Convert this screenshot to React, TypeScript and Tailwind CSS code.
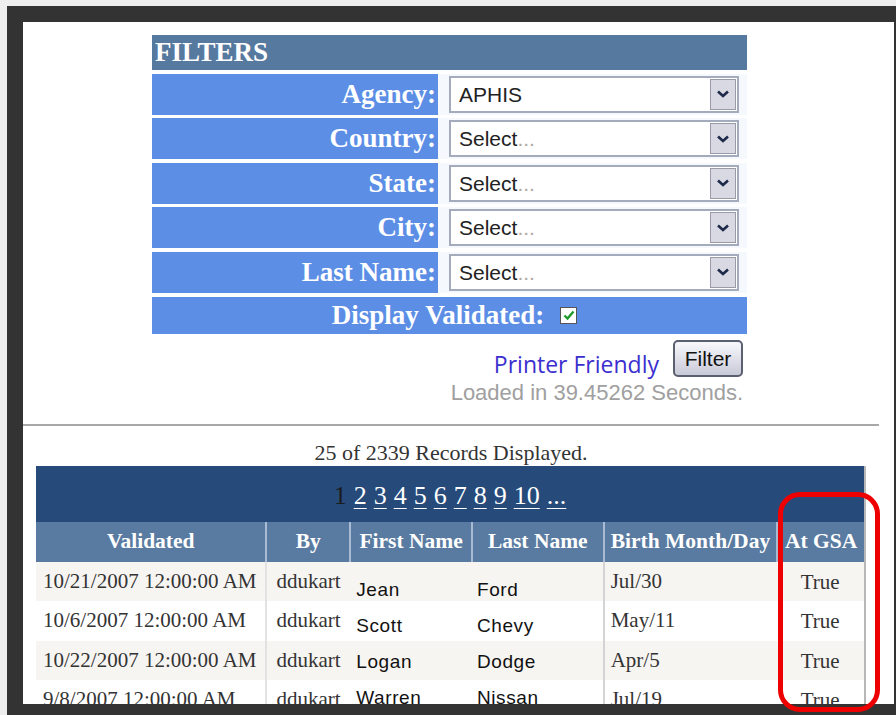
import React from "react";

const serif = { fontFamily: '"Liberation Serif", "Times New Roman", serif' };
const sans = { fontFamily: '"Liberation Sans", Arial, sans-serif' };
const soft = { fontFamily: '"Open Sans", "Liberation Sans", sans-serif' };

const filters = [
  { label: "Agency:", value: "APHIS", placeholder: false },
  { label: "Country:", value: "Select", placeholder: true },
  { label: "State:", value: "Select", placeholder: true },
  { label: "City:", value: "Select", placeholder: true },
  { label: "Last Name:", value: "Select", placeholder: true },
];

const rows = [
  { validated: "10/21/2007 12:00:00 AM", by: "ddukart", first: "Jean", last: "Ford", birth: "Jul/30", gsa: "True" },
  { validated: "10/6/2007 12:00:00 AM", by: "ddukart", first: "Scott", last: "Chevy", birth: "May/11", gsa: "True" },
  { validated: "10/22/2007 12:00:00 AM", by: "ddukart", first: "Logan", last: "Dodge", birth: "Apr/5", gsa: "True" },
  { validated: "9/8/2007 12:00:00 AM", by: "ddukart", first: "Warren", last: "Nissan", birth: "Jul/19", gsa: "True" },
];

// name cells sit on a tighter rhythm than the rest of the row
const nameOffsets = ["pt-[18px]", "pt-[14.5px]", "pt-[11px]", "pt-[7.5px]"];

function Chevron() {
  return (
    <svg width="14" height="10" viewBox="0 0 14 10">
      <path d="M2 2.5 L7 7 L12 2.5" fill="none" stroke="#1d2a4a" strokeWidth="2.6" />
    </svg>
  );
}

function SelectBox({ value, placeholder }: { value: string; placeholder: boolean }) {
  return (
    <div className="flex h-[37px] w-[290px] items-center border-2 border-[#a3abbd] bg-white">
      <div className="flex-1 pl-[8px] text-[21px] leading-none text-[#222]" style={sans}>
        {value}
        {placeholder && <span className="text-[#b0a8a0]">...</span>}
      </div>
      <div className="mr-[1px] flex h-[31px] w-[26px] items-center justify-center border border-[#9a9aa8] bg-[#d9d9e4]">
        <Chevron />
      </div>
    </div>
  );
}

const cols = ["w-[230px]", "w-[84px]", "w-[122px]", "w-[132px]", "w-[174px]", "w-[88px]"];
const heads = ["Validated", "By", "First Name", "Last Name", "Birth Month/Day", "At GSA"];

export default function App() {
  return (
    <div className="relative h-[715px] w-[896px] overflow-hidden bg-[#eeeeee] pl-[7px] pt-[6px]">
      <div className="h-full bg-[#333333] pb-[11px] pl-[16px] pr-[2px] pt-[16px]">
        <div className="flex h-full flex-col overflow-hidden bg-white">
          {/* filter panel */}
          <div className="ml-[129px] mt-[13px] flex w-[595px] flex-col gap-[3.6px]">
            <div
              className="flex h-[35px] items-center bg-[#56799f] pl-[3px] text-[27px] font-bold leading-none text-white"
              style={serif}
            >
              FILTERS
            </div>
            {filters.map((f) => (
              <div key={f.label} className="flex h-[41px] items-stretch">
                <div
                  className="flex w-[286px] items-center justify-end bg-[#5c8ee6] pr-[2px] text-[27px] font-bold leading-none text-white"
                  style={serif}
                >
                  {f.label}
                </div>
                <div className="flex flex-1 items-center bg-[#f5f8fd] pl-[11px]">
                  <SelectBox value={f.value} placeholder={f.placeholder} />
                </div>
              </div>
            ))}
            <div
              className="flex h-[37px] items-center justify-center gap-[16px] bg-[#5c8ee6] pl-[10px] text-[27px] font-bold leading-none text-white"
              style={serif}
            >
              <span>Display Validated:</span>
              <span className="flex h-[17px] w-[17px] items-center justify-center border border-[#555] bg-white">
                <svg width="12" height="11" viewBox="0 0 12 11">
                  <path d="M1.5 5.5 L4.5 8.5 L10.5 1.5" fill="none" stroke="#1f9a2a" strokeWidth="2.4" />
                </svg>
              </span>
            </div>
          </div>

          {/* actions */}
          <div className="ml-[129px] mt-[6px] flex h-[37px] w-[591px] items-center justify-end gap-[14px]">
            <span className="mt-[12px] text-[23px] leading-none text-[#3b2fcf]" style={soft}>
              Printer Friendly
            </span>
            <button
              className="flex h-[37px] w-[70px] items-center justify-center rounded-[5px] border-2 border-[#5a6070] bg-gradient-to-b from-[#f8f8fc] to-[#c9cad8] text-[21px] leading-none text-[#111]"
              style={sans}
            >
              Filter
            </button>
          </div>
          <div className="ml-[129px] mt-[5px] w-[591px] text-right text-[22px] leading-none text-[#a0a0a0]" style={sans}>
            Loaded in 39.45262 Seconds.
          </div>

          <div className="mt-[20px] h-[2px] w-[856px] shrink-0 bg-[#a8a8a8]" />

          <div className="mt-[16px] w-[856px] text-center text-[22px] leading-none text-[#333]" style={serif}>
            25 of 2339 Records Displayed.
          </div>

          {/* records table */}
          <div className="ml-[13px] mt-[2px] w-[830px] border-r-2 border-[#b8b8b8]" style={serif}>
            <div className="flex h-[56px] items-center justify-center gap-[7px] bg-[#264b7b] pt-[4px] text-[26px] leading-none">
              <span className="text-[#1c1c1c]">1</span>
              {["2", "3", "4", "5", "6", "7", "8", "9", "10", "..."].map((n) => (
                <span key={n} className="text-white underline decoration-1 underline-offset-4">
                  {n}
                </span>
              ))}
            </div>
            <div className="flex h-[40px] bg-[#5a7ba1]">
              {heads.map((h, i) => (
                <div
                  key={h}
                  className={`${cols[i]} flex items-center justify-center text-[21.5px] font-bold leading-none text-white ${
                    i > 0 ? "border-l-2 border-[#a8bbd2]" : ""
                  }`}
                >
                  {h}
                </div>
              ))}
            </div>
            {rows.map((r, idx) => (
              <div key={r.validated} className={`flex h-[39.5px] ${idx % 2 === 0 ? "bg-[#f7f5f2]" : "bg-white"}`}>
                <div className={`${cols[0]} pl-[7px] pt-[9px] text-[21px] leading-none text-[#333]`}>{r.validated}</div>
                <div className={`${cols[1]} border-l-2 border-[#e2e2e2] pl-[9px] pt-[9px] text-[21px] leading-none text-[#333]`}>
                  {r.by}
                </div>
                <div
                  className={`${cols[2]} ${nameOffsets[idx]} pl-[7px] text-[19px] leading-none tracking-[0.6px] text-[#111]`}
                  style={sans}
                >
                  {r.first}
                </div>
                <div
                  className={`${cols[3]} ${nameOffsets[idx]} pl-[6px] text-[19px] leading-none tracking-[0.6px] text-[#111]`}
                  style={sans}
                >
                  {r.last}
                </div>
                <div className={`${cols[4]} border-l-2 border-[#d4d4d4] pl-[6px] pt-[9px] text-[21px] leading-none text-[#333]`}>
                  {r.birth}
                </div>
                <div className={`${cols[5]} pt-[10px] text-center text-[21px] leading-none text-[#333]`}>{r.gsa}</div>
              </div>
            ))}
          </div>
        </div>
      </div>

      {/* highlight marker over the At GSA column */}
      <div className="absolute left-[778px] top-[492px] h-[220px] w-[102px] rounded-[22px] border-[5px] border-[#ee0000]" />
    </div>
  );
}
